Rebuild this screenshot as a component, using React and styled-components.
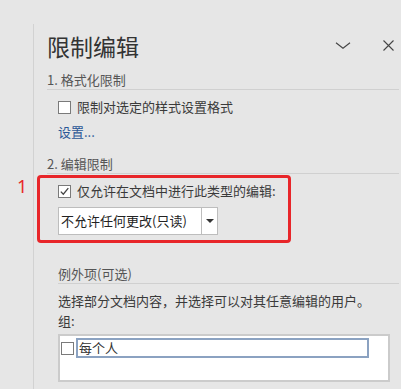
import React from 'react';
import styled, { createGlobalStyle } from 'styled-components';

const Global = createGlobalStyle`
  html, body { margin: 0; padding: 0; background: #e6e6e6; }
  body { font-family: "Noto Sans CJK SC", "Noto Sans", sans-serif; color: #383838; }
  * { box-sizing: border-box; }
`;

const Page = styled.div`
  width: 401px;
  height: 389px;
  overflow: hidden;
  display: flex;
  padding: 24px 0 0 33px;
`;

const Pane = styled.div`
  flex: 1;
  border-left: 1px solid #d2d2d2;
  padding: 7px 2px 0 13px;
`;

const Header = styled.div`
  display: flex;
  align-items: center;
  height: 30px;
`;

const Title = styled.h1`
  flex: 1;
  margin: 0;
  font-size: 23px;
  line-height: 30px;
  font-weight: 400;
  color: #333;
`;

const Icons = styled.div`
  display: flex;
  align-items: center;
  gap: 32px;
  margin: 0 5px 2px 0;
`;

const IconBtn = styled.span`
  display: flex;
  align-items: center;
  color: #444;
`;

const SectionHeader = styled.div`
  margin-top: ${p => p.$top}px;
  margin-left: ${p => p.$indent || 0}px;
  font-size: 13px;
  line-height: 18px;
  color: #555;
  border-bottom: 1px solid #d0d0d0;
`;

const CheckRow = styled.label`
  display: flex;
  align-items: center;
  gap: 6px;
  margin: ${p => p.$top || 0}px 0 0 ${p => p.$indent || 0}px;
  font-size: 13px;
  line-height: 18px;
  color: #3a3a3a;
`;

const Box = styled.span`
  width: 13px;
  height: 13px;
  flex: none;
  background: #fff;
  border: 1px solid #7a7a7a;
  display: flex;
  align-items: center;
  justify-content: center;
`;

const Link = styled.a`
  display: block;
  margin: 7px 0 0 11px;
  font-size: 13px;
  line-height: 18px;
  color: #2b5797;
  text-decoration: none;
`;

const Annotation = styled.div`
  position: relative;
  margin: 1px 0 0 -10px;
  width: 254px;
  border: 3px solid #e8262a;
  border-radius: 4px;
  padding: 4px 0 5px 18px;
`;

const Marker = styled.span`
  position: absolute;
  left: -23px;
  top: -1px;
  font-family: "Noto Sans", sans-serif;
  font-size: 18px;
  line-height: 18px;
  color: #e8262a;
`;

const Select = styled.div`
  display: flex;
  margin-top: 7px;
  width: 160px;
  height: 28px;
  border: 1px solid #bdbdbd;
  background: #fff;
`;

const SelectText = styled.span`
  flex: 1;
  padding-left: 2px;
  font-size: 13px;
  line-height: 26px;
  color: #222;
`;

const SelectArrow = styled.span`
  width: 16px;
  border-left: 1px solid #bdbdbd;
  display: flex;
  align-items: center;
  justify-content: center;
`;

const Exceptions = styled.div`
  margin-left: 11px;
`;

const Text = styled.div`
  margin-top: ${p => p.$top}px;
  font-size: 13px;
  line-height: 18px;
  color: #3a3a3a;
`;

const ListBox = styled.div`
  margin-top: 4px;
  width: 332px;
  height: 48px;
  border: 2px solid #cbcbcb;
  background: #fff;
  padding: 2px 0 0 1px;
`;

const ListRow = styled.div`
  display: flex;
  align-items: center;
  gap: 2px;
`;

const NameField = styled.div`
  width: 293px;
  height: 20px;
  border: 2px solid #8ba2c1;
  padding-left: 1px;
  font-size: 13px;
  line-height: 16px;
  color: #333;
`;

export default function App() {
  return (
    <>
      <Global />
      <Page>
        <Pane>
          <Header>
            <Title>限制编辑</Title>
            <Icons>
              <IconBtn>
                <svg width="16" height="7" viewBox="0 0 16 7">
                  <path d="M1 0.8 L8 6.2 L15 0.8" fill="none" stroke="currentColor" strokeWidth="1.1" />
                </svg>
              </IconBtn>
              <IconBtn>
                <svg width="11" height="11" viewBox="0 0 11 11">
                  <path d="M0.5 0.5 L10.5 10.5 M10.5 0.5 L0.5 10.5" fill="none" stroke="currentColor" strokeWidth="1.1" />
                </svg>
              </IconBtn>
            </Icons>
          </Header>

          <SectionHeader $top={10}>1. 格式化限制</SectionHeader>
          <CheckRow $top={8} $indent={11}>
            <Box />
            限制对选定的样式设置格式
          </CheckRow>
          <Link>设置...</Link>

          <SectionHeader $top={14}>2. 编辑限制</SectionHeader>
          <Annotation>
            <Marker>1</Marker>
            <CheckRow>
              <Box>
                <svg width="11" height="11" viewBox="0 0 11 11">
                  <path d="M1.8 5.6 L4.3 8.2 L9.3 2.2" fill="none" stroke="#444" strokeWidth="1.3" />
                </svg>
              </Box>
              仅允许在文档中进行此类型的编辑:
            </CheckRow>
            <Select>
              <SelectText>不允许任何更改(只读)</SelectText>
              <SelectArrow>
                <svg width="8" height="4" viewBox="0 0 8 4">
                  <path d="M0 0 L8 0 L4 4 Z" fill="#333" />
                </svg>
              </SelectArrow>
            </Select>
          </Annotation>

          <Exceptions>
            <SectionHeader $top={22}>例外项(可选)</SectionHeader>
            <Text $top={8}>选择部分文档内容，并选择可以对其任意编辑的用户。</Text>
            <Text $top={2}>组:</Text>
            <ListBox>
              <ListRow>
                <Box />
                <NameField>每个人</NameField>
              </ListRow>
            </ListBox>
          </Exceptions>
        </Pane>
      </Page>
    </>
  );
}
